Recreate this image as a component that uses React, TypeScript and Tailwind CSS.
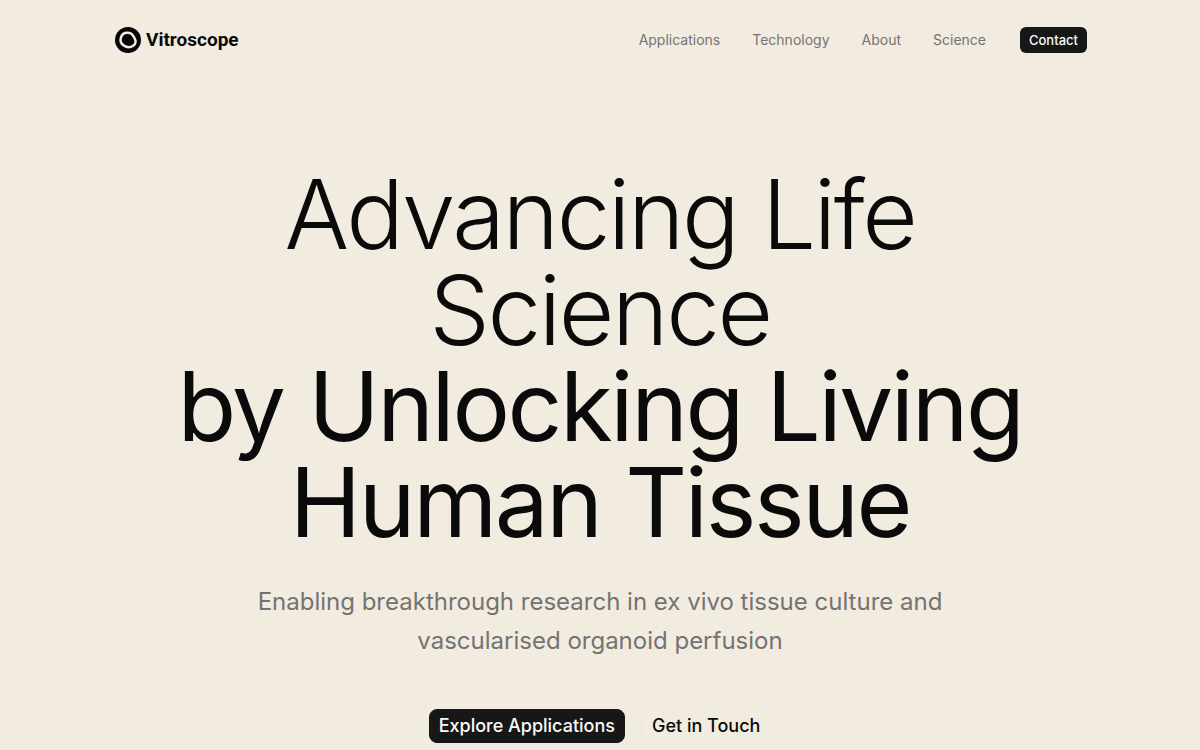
const links = ['Applications', 'Technology', 'About', 'Science'];

function Logo() {
  return (
    <a href="#" className="flex items-center gap-[5px] text-[#0a0a0a]">
      <svg viewBox="0 0 26 26" className="size-[26px]" aria-hidden="true">
        <circle cx="13" cy="13" r="13" fill="#0a0408" />
        <path
          d="M8.5 6.6C10.4 5.3 14.2 5.3 16 6.6C18.3 8.3 20.8 12.5 20.6 15C20.3 18 16.8 20.2 13.5 20.2C10.4 20.2 6.7 17.6 5.8 15C5 12.4 6.2 8.2 8.5 6.6Z"
          fill="#0a0408"
          stroke="#f2ebe0"
          strokeWidth="2.5"
        />
      </svg>
      <span className="font-['Roboto',sans-serif] text-[19px] leading-6 font-bold">Vitroscope</span>
    </a>
  );
}

export default function App() {
  return (
    <div className="min-h-screen bg-[#f2ebe0] font-['Inter',sans-serif] text-[#0a0a0a]">
      <header className="border-b border-[#efe6e0]">
        <div className="mx-auto flex h-20 max-w-5xl items-center justify-between pr-[25px] pl-[27px]">
          <Logo />
          <nav className="flex items-center gap-[34px] text-sm text-[#737373]">
            <div className="flex gap-8">
              {links.map((link) => (
                <a key={link} href="#">{link}</a>
              ))}
            </div>
            <button className="rounded-md bg-[#171717] px-[9px] py-[3px] text-[13px] leading-5 font-medium text-[#fafafa]">Contact</button>
          </nav>
        </div>
      </header>

      <main className="mx-auto max-w-4xl pt-[85px] text-center">
        <h1 className="text-8xl leading-none font-light tracking-tight">
          Advancing Life Science
          <span className="block font-normal">by Unlocking Living Human Tissue</span>
        </h1>
        <p className="mx-auto mt-8 max-w-3xl text-2xl leading-[39px] text-[#737373]">
          Enabling breakthrough research in ex vivo tissue culture and vascularised organoid perfusion
        </p>
        <div className="mt-[49px] flex items-start justify-center gap-4">
          <button className="rounded-lg border border-[#171717] bg-[#171717] px-[9px] py-0.5 text-lg font-medium text-[#fafafa]">Explore Applications</button>
          <button className="rounded-lg border border-[#ede5df] px-2.5 py-0.5 text-lg font-medium">Get in Touch</button>
        </div>
      </main>
    </div>
  );
}
